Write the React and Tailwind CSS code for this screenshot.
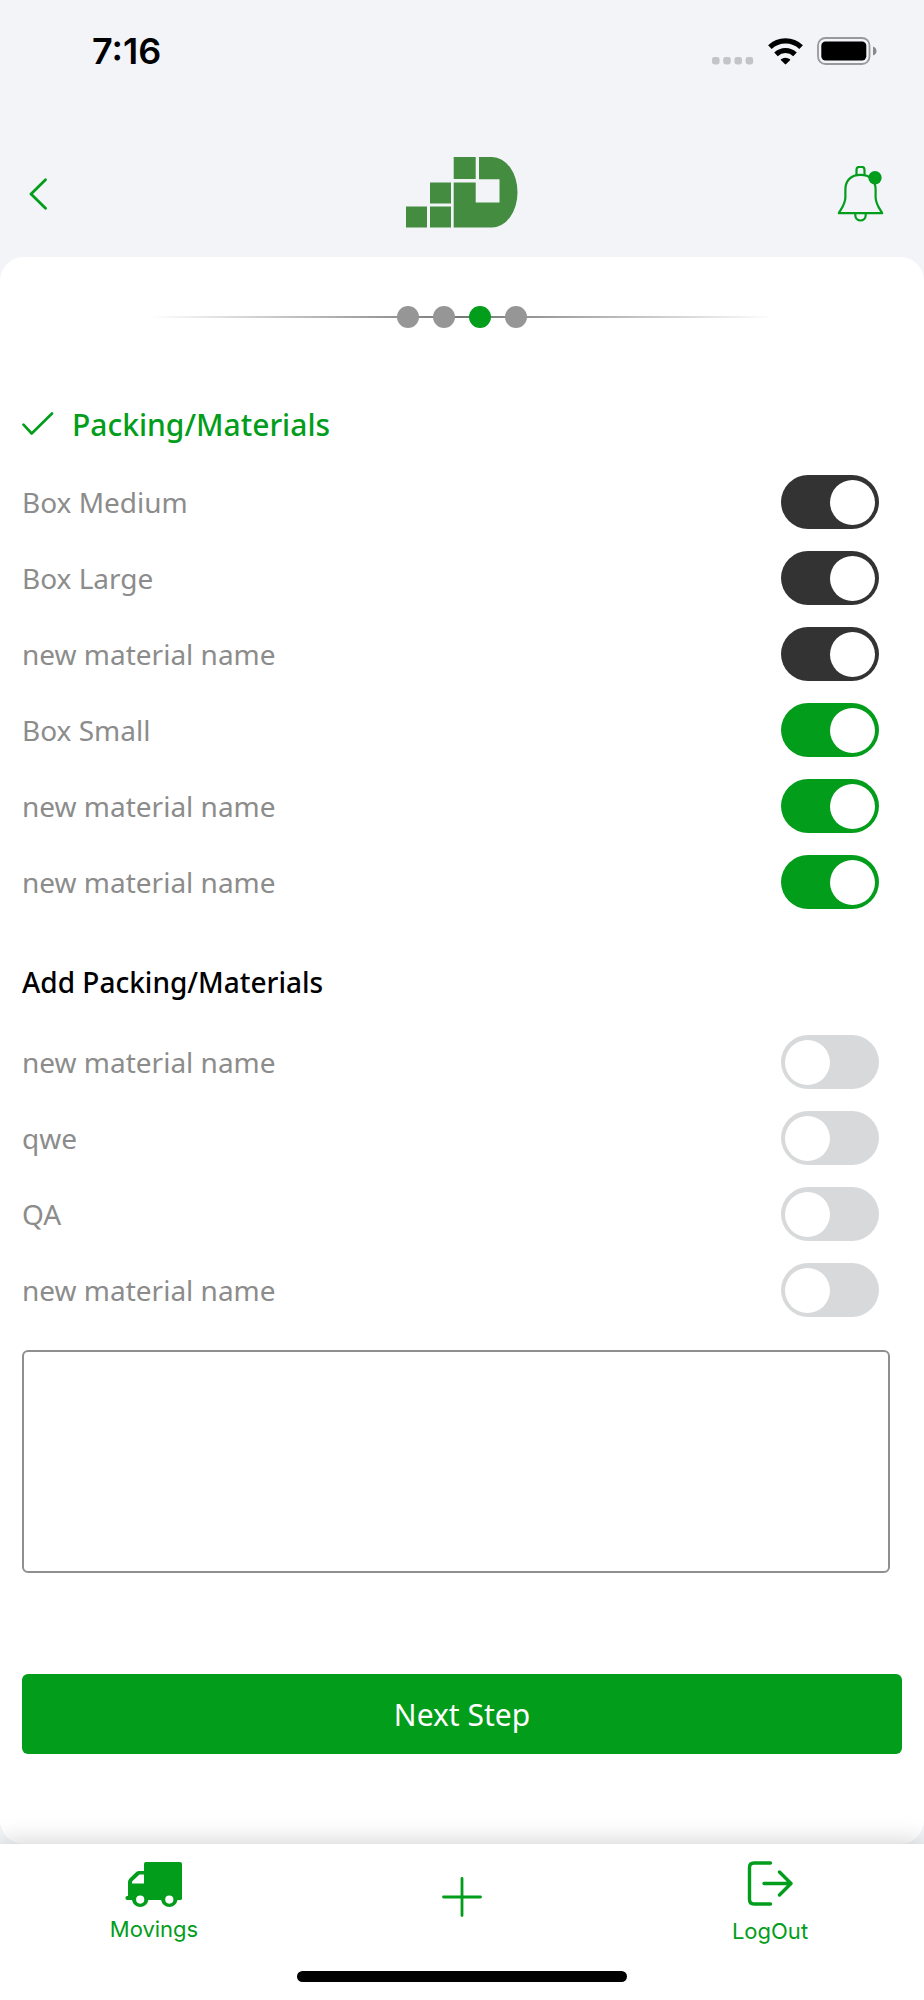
import { useState } from "react";

const packed = [
  { id: "p1", name: "Box Medium", tone: "dark" },
  { id: "p2", name: "Box Large", tone: "dark" },
  { id: "p3", name: "new material name", tone: "dark" },
  { id: "p4", name: "Box Small", tone: "green" },
  { id: "p5", name: "new material name", tone: "green" },
  { id: "p6", name: "new material name", tone: "green" },
];

const extra = [
  { id: "e1", name: "new material name", tone: "green" },
  { id: "e2", name: "qwe", tone: "green" },
  { id: "e3", name: "QA", tone: "green" },
  { id: "e4", name: "new material name", tone: "green" },
];

const tones = {
  dark: "checked:bg-[#333333]",
  green: "checked:bg-[#029d1a]",
};

function ToggleRow({ item, initial }) {
  const [on, setOn] = useState(initial);
  return (
    <li className="flex h-[76px] items-center justify-between pr-[23px]">
      <label htmlFor={item.id} className="text-[28px] leading-10 text-[#8c8c8c]">
        {item.name}
      </label>
      <input
        id={item.id}
        type="checkbox"
        role="switch"
        checked={on}
        onChange={(e) => setOn(e.target.checked)}
        className={`flex h-[54px] w-[98px] shrink-0 cursor-pointer appearance-none items-center rounded-full bg-[#d8d9db] px-1 before:size-[45px] before:rounded-full before:bg-white checked:justify-end ${tones[item.tone]}`}
      />
    </li>
  );
}

function StatusBar() {
  return (
    <div className="flex h-[102px] items-center justify-between pr-[47px] pl-[92px]">
      <span className="font-[Inter,sans-serif] text-[36px] leading-10 font-semibold text-black">7:16</span>
      <div className="flex items-center gap-[14px]">
        <svg width="42" height="28" viewBox="0 0 42 28" fill="#c3c4c8" aria-hidden="true">
          <rect x="0" y="20" width="7.6" height="7.4" rx="2.4" />
          <rect x="11.2" y="20" width="7.6" height="7.4" rx="2.4" />
          <rect x="22.4" y="20" width="7.6" height="7.4" rx="2.4" />
          <rect x="33.6" y="20" width="7.6" height="7.4" rx="2.4" />
        </svg>
        <svg width="35" height="27" viewBox="0 0 35 27" aria-hidden="true">
          <g fill="none" stroke="#000" strokeWidth="5.2">
            <path d="M1.9 9.2a22.6 22.6 0 0 1 31.2 0" />
            <path d="M8 16.3a13.8 13.8 0 0 1 19 0" />
          </g>
          <path d="M13 21.3a7 7 0 0 1 9 0q.5.5 0 1l-3.9 3.8q-.6.6-1.2 0L13 22.3q-.5-.5 0-1z" />
        </svg>
        <svg width="60" height="28" viewBox="0 0 60 28" aria-hidden="true">
          <rect x="1" y="1" width="51.5" height="26" rx="7.5" fill="none" stroke="#99999c" strokeWidth="1.8" />
          <rect x="4.3" y="4.5" width="45" height="19" rx="4.2" />
          <path d="M56 9.5q3.5 1.300 3.5 4.500t-3.5 4.500z" fill="#88898c" />
        </svg>
      </div>
    </div>
  );
}

function Header() {
  return (
    <header className="grid h-[155px] grid-cols-3 items-center px-7 pt-[25px]">
      <button type="button" aria-label="Back" className="mt-1 justify-self-start">
        <svg width="20" height="32" viewBox="0 0 20 32" fill="none" stroke="#029d1a" strokeWidth="2.8" strokeLinecap="round" strokeLinejoin="round">
          <path d="M17.5 1.800 3 16l14.500 14.200" />
        </svg>
      </button>
      <svg className="justify-self-center" width="112" height="72" viewBox="0 0 112 72" fill="#448c40" role="img" aria-label="Logo">
        <path d="M0 50.500h21v21H0zM24 50.500h21v21H24zM24 26.500h21v21H24zM47.700 1h22v22h-22z" />
        <path d="M73 1h13a25.500 35.200 0 0 1 0 70.500H47.700v-45h22v20H93.500V23.300H73z" />
      </svg>
      <button type="button" aria-label="Notifications" className="mt-1 mr-3 justify-self-end">
        <svg width="47" height="56" viewBox="0 0 47 56" fill="none" stroke="#029d1a" strokeWidth="2.200">
          <path d="M1.800 47.200C4.500 42.500 8.400 38 8.400 31V23.500C8.400 14 14.500 8.800 23.500 8.800S38.600 14 38.600 23.500V31c0 7 3.900 11.500 6.600 16.200z" strokeLinejoin="round" />
          <path d="M19.500 9V4q0-3 2.500-3h3q2.500 0 2.500 3v5" />
          <path d="M18.300 47.500v1.800a5.200 5.200 0 0 0 10.400 0v-1.800" />
          <circle cx="38" cy="11.700" r="6.700" fill="#029d1a" stroke="none" />
        </svg>
      </button>
    </header>
  );
}

function Steps() {
  return (
    <div className="mx-auto grid w-[71%] items-center justify-items-center" aria-label="Step 3 of 4">
      <div className="col-start-1 row-start-1 h-[2px] w-full bg-linear-to-r from-transparent via-[#777777] to-transparent" />
      <ol className="col-start-1 row-start-1 flex gap-[14px]">
        <li className="size-[22px] rounded-full bg-[#969696]" />
        <li className="size-[22px] rounded-full bg-[#969696]" />
        <li className="size-[22px] rounded-full bg-[#029d1a]" />
        <li className="size-[22px] rounded-full bg-[#969696]" />
      </ol>
    </div>
  );
}

function BottomNav() {
  return (
    <nav className="relative bg-white shadow-[0_-2px_24px_rgba(0,0,0,0.18)]">
      <div className="grid h-[127px] grid-cols-3 justify-items-center font-[Inter,sans-serif] text-[22px] leading-7 text-[#029d1a]">
        <a href="#movings" className="flex flex-col items-center gap-1.5 pt-[18px]">
          <svg width="58" height="47" viewBox="0 0 58 47" fill="currentColor" aria-hidden="true">
            <path
              fillRule="evenodd"
              d="M20.800 0H55q2 0 2 2v34.500q0 1.500-1.500 1.500h-3a8.300 8.300 0 0 1-16.400 0H23.400A8.300 8.300 0 0 1 7 38H2.500a1.900 1.900 0 0 1-.2-4H3V20q0-2 1.500-3.500L11.500 9.800Q12.700 9 14 9h5V2q0-2 1.800-2zM19 12.600h-4.500L7 19.600v2H19zM15.200 33.500a4.100 4.100 0 1 0 0 8.200 4.100 4.100 0 0 0 0-8.200zM44.300 33.500a4.100 4.100 0 1 0 0 8.200 4.100 4.100 0 0 0 0-8.200z"
            />
          </svg>
          Movings
        </a>
        <button type="button" aria-label="Add" className="flex items-start pt-[33px]">
          <svg width="40" height="40" viewBox="0 0 40 40" fill="none" stroke="currentColor" strokeWidth="2.800" strokeLinecap="round">
            <path d="M20 1.500v37M1.500 20h37" />
          </svg>
        </button>
        <button type="button" className="flex flex-col items-center gap-2.5 pt-[17px]">
          <svg width="46" height="46" viewBox="0 0 46 46" fill="none" stroke="currentColor" strokeWidth="3.400" strokeLinecap="round" strokeLinejoin="round" aria-hidden="true">
            <path d="M23.500 2H7Q2.500 2 2.500 6.500v32Q2.500 43 7 43h16.500M17 22.500h27M32.500 11 44 22.500 32.500 34" />
          </svg>
          LogOut
        </button>
      </div>
      <div className="mx-auto mb-[18px] h-[11px] w-[330px] max-w-full rounded-full bg-black" />
    </nav>
  );
}

export default function App() {
  return (
    <div className="flex min-h-screen flex-col bg-[#f2f4f8] font-['Noto_Sans',sans-serif]">
      <StatusBar />
      <Header />
      <main className="flex flex-1 flex-col rounded-[24px] bg-white px-[22px] pt-[49px]">
        <Steps />
        <h1 className="mt-[72px] flex h-[48px] items-center gap-[18px] text-[30px] font-medium text-[#029d1a]">
          <svg width="32" height="24" viewBox="0 0 32 24" fill="none" stroke="currentColor" strokeWidth="2.600" strokeLinecap="round" strokeLinejoin="round" aria-hidden="true">
            <path d="M1.500 12.700 9.700 21.500 30 1.500" />
          </svg>
          Packing/Materials
        </h1>
        <ul className="mt-4">
          {packed.map((item) => (
            <ToggleRow key={item.id} item={item} initial={true} />
          ))}
        </ul>
        <h2 className="mt-[38px] h-[48px] text-[28px] leading-[48px] font-medium text-black">Add Packing/Materials</h2>
        <ul className="mt-[18px]">
          {extra.map((item) => (
            <ToggleRow key={item.id} item={item} initial={false} />
          ))}
        </ul>
        <textarea
          aria-label="Notes"
          className="mt-[22px] mr-[12px] h-[223px] resize-none rounded-md border-2 border-[#8f8f8f] bg-white p-4 text-[28px] outline-none"
        />
        <button type="button" className="mt-[101px] mb-[90px] h-[80px] rounded-md bg-[#029d1a] text-[30px] text-white">
          Next Step
        </button>
      </main>
      <BottomNav />
    </div>
  );
}
